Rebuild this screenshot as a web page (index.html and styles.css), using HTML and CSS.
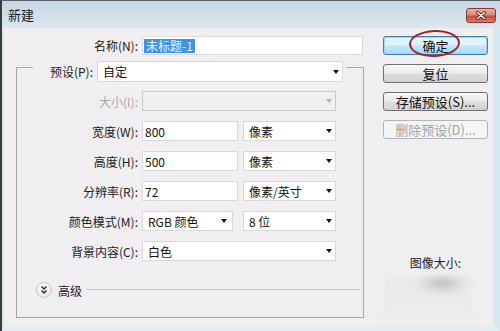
FILE: index.html
```html
<!DOCTYPE html>
<html lang="zh-CN">
<head>
<meta charset="utf-8">
<title>新建</title>
<link rel="stylesheet" href="styles.css">
</head>
<body>
<div class="window">
  <div class="titlebar">
    <span class="title">新建</span>
    <span class="close"><svg width="12" height="9" viewBox="0 0 12 9"><path d="M2.5 1.5 L9.5 7.5 M9.5 1.5 L2.5 7.5" stroke="#5a1a14" stroke-width="3" stroke-linecap="round"/><path d="M2.5 1.5 L9.5 7.5 M9.5 1.5 L2.5 7.5" stroke="#ffffff" stroke-width="1.6" stroke-linecap="round"/></svg></span>
  </div>
  <div class="client">
    <div class="left">
      <div class="row name-row">
        <span class="label">名称(N):</span>
        <span class="field name"><span class="sel">未标题-1</span></span>
      </div>
      <div class="group">
        <div class="preset">
          <span class="plabel">预设(P):</span>
          <span class="field select w-preset"><span class="val">自定</span><span class="arrow"></span></span>
        </div>
        <div class="rows">
          <div class="row disabled">
            <span class="label">大小(I):</span>
            <span class="field select w-full"><span class="val"></span><span class="arrow"></span></span>
          </div>
          <div class="row">
            <span class="label">宽度(W):</span>
            <span class="field w-input"><span class="val">800</span></span>
            <span class="field select w-unit"><span class="val">像素</span><span class="arrow"></span></span>
          </div>
          <div class="row">
            <span class="label">高度(H):</span>
            <span class="field w-input"><span class="val">500</span></span>
            <span class="field select w-unit"><span class="val">像素</span><span class="arrow"></span></span>
          </div>
          <div class="row">
            <span class="label">分辨率(R):</span>
            <span class="field w-input"><span class="val">72</span></span>
            <span class="field select w-unit"><span class="val">像素/英寸</span><span class="arrow"></span></span>
          </div>
          <div class="row">
            <span class="label">颜色模式(M):</span>
            <span class="field select w-mode"><span class="val">RGB 颜色</span><span class="arrow"></span></span>
            <span class="field select w-bits"><span class="val">8 位</span><span class="arrow"></span></span>
          </div>
          <div class="row">
            <span class="label">背景内容(C):</span>
            <span class="field select w-full"><span class="val">白色</span><span class="arrow"></span></span>
          </div>
        </div>
        <div class="advanced">
          <span class="adv-icon"><svg width="14" height="14" viewBox="0 0 14 14"><path d="M4.5 3.5 L7 6 L9.5 3.5 M4.5 7.5 L7 10 L9.5 7.5" fill="none" stroke="#2a2a2a" stroke-width="1.5"/></svg></span>
          <span class="adv-text">高级</span>
          <span class="adv-line"></span>
        </div>
      </div>
    </div>
    <div class="right">
      <div class="buttons">
        <span class="btn default">确定</span>
        <span class="btn">复位</span>
        <span class="btn">存储预设(S)...</span>
        <span class="btn off">删除预设(D)...</span>
      </div>
      <span class="ring"></span>
      <div class="imgsize">图像大小:</div>
      <div class="blur"></div>
    </div>
  </div>
</div>
</body>
</html>
```

FILE: styles.css
```css
* { box-sizing: border-box; }
html, body { margin: 0; padding: 0; }
body {
  width: 500px;
  height: 331px;
  overflow: hidden;
  background: #f0eef1;
  font-family: "Noto Sans CJK SC", "Noto Sans", sans-serif;
  font-size: 12px;
  color: #1c1c1c;
}
.window {
  width: 500px;
  height: 331px;
  display: flex;
  flex-direction: column;
  border-left: 2px solid #3a3a3a;
  border-top: 1px solid #5d636b;
}
.titlebar {
  height: 27px;
  flex: none;
  display: flex;
  align-items: flex-start;
  padding: 0 4px 0 6px;
  background: linear-gradient(#c7d5e4, #d6e1ec 70%, #dde6ef);
}
.title {
  font-size: 13px;
  line-height: 27px;
  color: #1b1b1b;
}
.close {
  margin-left: auto;
  margin-top: 7px;
  width: 30px;
  height: 15px;
  border: 1px solid #8a3a30;
  border-radius: 3px;
  background: linear-gradient(#eab0a4, #d9867a 45%, #c4503f 55%, #d9786a);
  display: flex;
  align-items: center;
  justify-content: center;
}
.close svg { display: block; }
.client {
  flex: 1;
  display: flex;
  background: #f0eef1;
  border-left: 2px solid #dde4ec;
  border-right: 7px solid #d5e8ef;
  border-bottom: 6px solid #e4eef2;
  padding-left: 12px;
  padding-top: 8px;
}
.left {
  width: 352px;
  flex: none;
  display: flex;
  flex-direction: column;
}
.row {
  display: flex;
  align-items: center;
  height: 20px;
}
.label {
  width: 126px;
  flex: none;
  text-align: right;
  padding-right: 4px;
  white-space: nowrap;
}
.group .label { width: 125px; }
.name-row { height: 19px; }
.field {
  height: 20px;
  background: #ffffff;
  border: 1px solid #d8d8db;
  display: flex;
  align-items: center;
  padding: 0 3px 0 5px;
  color: #111;
  white-space: nowrap;
}
.name {
  width: 221px;
  height: 19px;
  padding-left: 1px;
}
.sel {
  background: #3f93e2;
  color: #e9f3ff;
  padding: 0 2px;
  line-height: 14px;
}
.w-input { width: 96px; padding-left: 2px; }
.w-unit { width: 93px; margin-left: 5px; }
.w-mode { width: 91px; }
.w-bits { width: 93px; margin-left: 10px; }
.w-full { width: 194px; }
.w-preset { width: 246px; height: 21px; }
.arrow {
  margin-left: auto;
  width: 0;
  height: 0;
  border-left: 3.5px solid transparent;
  border-right: 3.5px solid transparent;
  border-top: 4px solid #111;
}
.w-mode .arrow { margin-right: 2px; }
.disabled .label { color: #a9a9ab; }
.disabled .field {
  background: #efeef0;
  border-color: #cbcbce;
}
.disabled .arrow { border-top-color: #b4b4b6; }
.group {
  margin-top: 12px;
  width: 348px;
  border: 1px solid #a7a7a9;
  display: flex;
  flex-direction: column;
  padding-bottom: 19px;
}
.preset {
  align-self: flex-start;
  display: flex;
  align-items: center;
  margin: -7px 0 0 16px;
  padding-right: 3px;
  background: #f0eef1;
}
.plabel {
  width: 64px;
  text-align: right;
  padding-right: 4px;
  white-space: nowrap;
}
.rows {
  margin-top: 9px;
  display: flex;
  flex-direction: column;
  gap: 10px;
}
.advanced {
  margin: 21px 3px 0 19px;
  height: 16px;
  display: flex;
  align-items: center;
}
.adv-icon {
  width: 16px;
  height: 16px;
  border-radius: 50%;
  border: 1px solid #c6c6c8;
  background: radial-gradient(circle at 40% 35%, #ffffff, #ebebed 70%, #dcdcde);
  display: flex;
  align-items: center;
  justify-content: center;
}
.adv-icon svg { display: block; }
.adv-text { margin-left: 6px; }
.adv-line {
  flex: 1;
  margin-left: 5px;
  height: 1px;
  background: #c4c4c6;
  margin-top: -2px;
}
.right {
  position: relative;
  margin-left: 15px;
  width: 105px;
  display: flex;
  flex-direction: column;
}
.buttons {
  display: flex;
  flex-direction: column;
  gap: 9px;
}
.btn {
  height: 19px;
  border: 1px solid #707070;
  border-radius: 3px;
  background: linear-gradient(#f6f6f6, #ececec 48%, #dedede 52%, #d2d2d2);
  font-size: 13px;
  color: #111;
  display: flex;
  align-items: center;
  justify-content: center;
  white-space: nowrap;
}
.btn.default {
  border-color: #3c7fb1;
  background: linear-gradient(#eaf6fd, #d9f0fc 48%, #bee6fd 52%, #a9dbf6);
  box-shadow: inset 0 0 0 1px #9fd3ef;
}
.btn.off {
  border-color: #b2b6b9;
  background: #f4f4f4;
  color: #a4a4a6;
}
.ring {
  position: absolute;
  left: 26px;
  top: -6px;
  width: 51px;
  height: 27px;
  border: 2px solid #a2232c;
  border-radius: 50%;
  transform: rotate(-2deg);
}
.imgsize {
  margin-top: 117px;
  text-align: center;
  line-height: 14px;
  color: #222;
}
.blur {
  margin-top: 7px;
  width: 90px;
  height: 43px;
  background: radial-gradient(ellipse 30px 14px at 66% 12%, #b9b9bb, #dcdcde 60%, rgba(232,232,234,0) 100%), linear-gradient(#e9e9eb, #ebeaec 60%, #eeedef);
  filter: blur(3px);
}
```
